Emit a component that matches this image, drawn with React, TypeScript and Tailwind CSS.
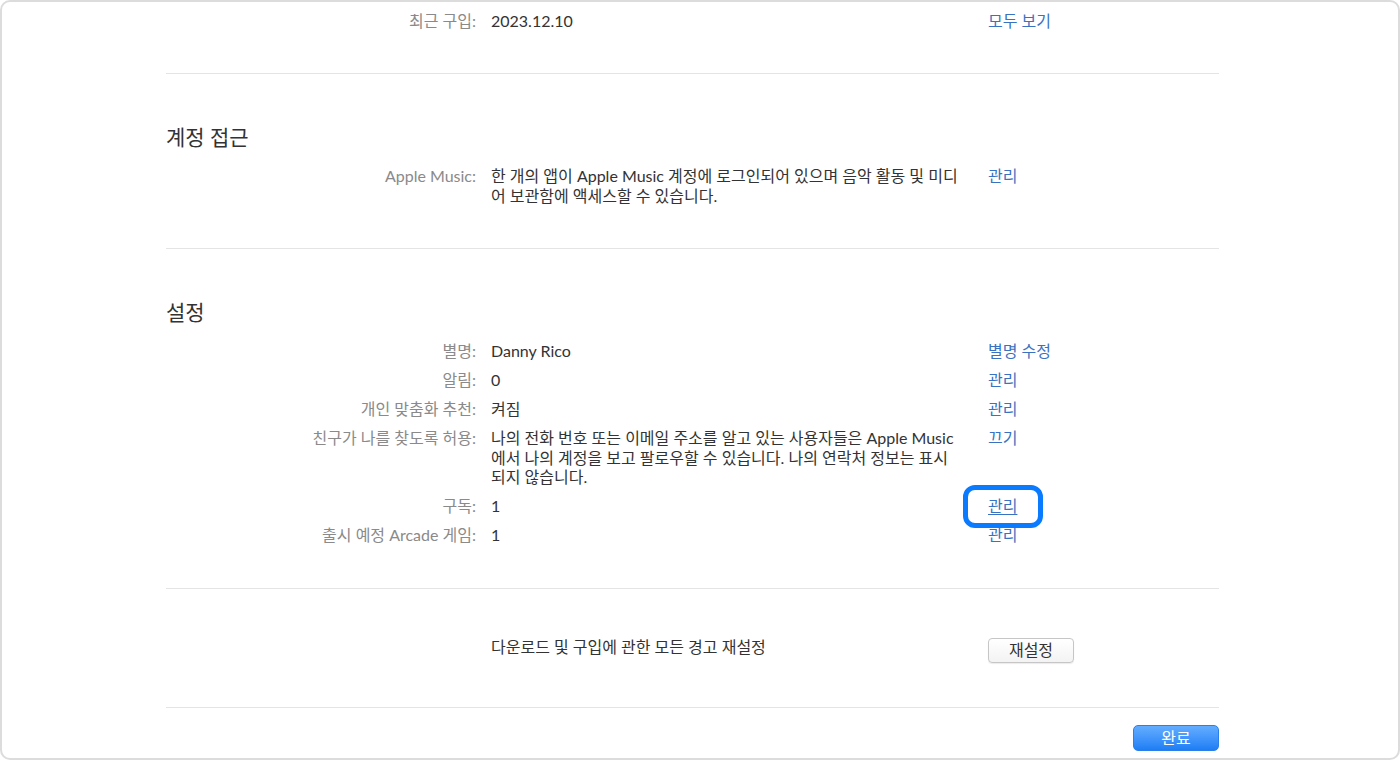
import React from 'react';

const font = { fontFamily: 'Lato, "Noto Sans CJK KR", sans-serif' };

type Row = {
  label: string;
  value: React.ReactNode;
  action?: string;
  highlight?: boolean;
  tight?: boolean;
};

const settings: Row[] = [
  { label: '별명:', value: 'Danny Rico', action: '별명 수정' },
  { label: '알림:', value: '0', action: '관리' },
  { label: '개인 맞춤화 추천:', value: '켜짐', action: '관리' },
  {
    label: '친구가 나를 찾도록 허용:',
    value: (
      <>
        나의 전화 번호 또는 이메일 주소를 알고 있는 사용자들은 Apple Music
        <br />
        에서 나의 계정을 보고 팔로우할 수 있습니다. 나의 연락처 정보는 표시
        <br />
        되지 않습니다.
      </>
    ),
    action: '끄기',
    tight: true,
  },
  { label: '구독:', value: '1', action: '관리', highlight: true },
  { label: '출시 예정 Arcade 게임:', value: '1', action: '관리' },
];

function InfoRow({ row }: { row: Row }) {
  return (
    <div className="grid grid-cols-[310px_482px_1fr] gap-x-[15px] text-[16px] leading-[20px]">
      <div className="text-right text-[#8a8a8a] whitespace-nowrap">{row.label}</div>
      <div className={`text-[#333333] whitespace-nowrap ${row.tight ? 'leading-[19.5px]' : ''}`}>
        {row.value}
      </div>
      <div>
        {row.action && (
          <span className="relative inline-block">
            <a
              href="#"
              className={`text-[#3a72c2] ${row.highlight ? 'underline underline-offset-2' : ''}`}
            >
              {row.action}
            </a>
            {/* focus ring drawn over the link */}
            {row.highlight && (
              <span className="absolute left-[-25px] top-[-11px] w-[80px] h-[43px] rounded-[12px] border-[5px] border-[#0a7bff] pointer-events-none z-10" />
            )}
          </span>
        )}
      </div>
    </div>
  );
}

export default function App() {
  return (
    <div className="w-[1400px] h-[760px] bg-white overflow-hidden" style={font}>
      <div className="h-full border-2 border-[#dcdcdc] rounded-[10px] bg-white pl-[164px] pr-[179px]">
        {/* recent purchase */}
        <div className="pt-[9px] pb-[42px] border-b border-[#e4e4e4]">
          <InfoRow row={{ label: '최근 구입:', value: '2023.12.10', action: '모두 보기' }} />
        </div>

        {/* account access */}
        <section className="pt-[50px] pb-[42px] border-b border-[#e4e4e4]">
          <h2 className="text-[21px] leading-[26px] text-[#333333] mb-[16px]">계정 접근</h2>
          <InfoRow
            row={{
              label: 'Apple Music:',
              value: (
                <>
                  한 개의 앱이 Apple Music 계정에 로그인되어 있으며 음악 활동 및 미디
                  <br />
                  어 보관함에 액세스할 수 있습니다.
                </>
              ),
              action: '관리',
            }}
          />
        </section>

        {/* settings */}
        <section className="pt-[50px] pb-[43px] border-b border-[#e4e4e4]">
          <h2 className="text-[21px] leading-[26px] text-[#333333] mb-[16px]">설정</h2>
          <div className="flex flex-col gap-[9px]">
            {settings.map((row) => (
              <InfoRow key={row.label} row={row} />
            ))}
          </div>
        </section>

        {/* reset warnings */}
        <div className="pt-[48px] pb-[44px] border-b border-[#e4e4e4] grid grid-cols-[310px_482px_1fr] gap-x-[15px] text-[16px] leading-[20px]">
          <div />
          <div className="text-[#333333]">다운로드 및 구입에 관한 모든 경고 재설정</div>
          <div>
            <button className="mt-[1px] w-[86px] h-[25px] rounded-[4px] border border-[#c6c6c6] bg-gradient-to-b from-white to-[#f3f3f3] shadow-[0_1px_1px_rgba(0,0,0,0.08)] text-[16px] text-[#333333] leading-none">
              재설정
            </button>
          </div>
        </div>

        <div className="flex justify-end pt-[17px]">
          <button className="w-[86px] h-[26px] rounded-[5px] border border-[#2a7fe8] bg-gradient-to-b from-[#63adff] to-[#1c7ef5] text-white text-[16px] leading-none">
            완료
          </button>
        </div>
      </div>
    </div>
  );
}
